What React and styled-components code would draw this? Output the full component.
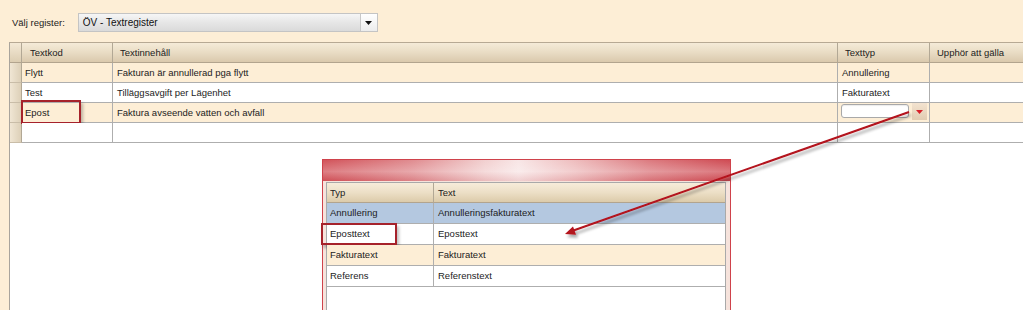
import React from 'react'
import styled, { createGlobalStyle } from 'styled-components'

const GlobalStyle = createGlobalStyle`
  html, body { margin: 0; padding: 0; }
  body {
    font-family: "Liberation Sans", Arial, sans-serif;
    font-size: 9.5px;
    color: #1c1c1c;
    background: #fdeed6;
  }
`

const rows = [
  { kod: 'Flytt', text: 'Fakturan är annullerad pga flytt', typ: 'Annullering' },
  { kod: 'Test', text: 'Tilläggsavgift per Lägenhet', typ: 'Fakturatext' },
  { kod: 'Epost', text: 'Faktura avseende vatten och avfall', typ: null, edit: true },
  { kod: '', text: '', typ: '' },
]

const popupRows = [
  { typ: 'Annullering', text: 'Annulleringsfakturatext', kind: 'sel' },
  { typ: 'Eposttext', text: 'Eposttext', kind: 'white', mark: true },
  { typ: 'Fakturatext', text: 'Fakturatext', kind: 'cream' },
  { typ: 'Referens', text: 'Referenstext', kind: 'white' },
]

export default function App() {
  return (
    <Page>
      <GlobalStyle />
      <Toolbar>
        <Label>Välj register:</Label>
        <Combo>
          <ComboText>ÖV - Textregister</ComboText>
          <ComboButton><Tri color="#111" /></ComboButton>
        </Combo>
      </Toolbar>

      <GridArea>
        <Grid>
          <RowHead header />
          <HeadCell pad={8}>Textkod</HeadCell>
          <HeadCell>Textinnehåll</HeadCell>
          <HeadCell>Texttyp</HeadCell>
          <HeadCell last>Upphör att gälla</HeadCell>

          {rows.map((r, i) => (
            <React.Fragment key={i}>
              <RowHead />
              <Cell cream={i % 2 === 0} pad={3}>
                {r.kod}
                {r.edit && <Mark style={{ left: -1, top: -3, width: 60, height: 24 }} />}
              </Cell>
              <Cell cream={i % 2 === 0}>{r.text}</Cell>
              <Cell cream={i % 2 === 0}>
                {r.edit ? (
                  <EditRow>
                    <EditBox />
                    <EditButton><Tri color="#d8202a" /></EditButton>
                  </EditRow>
                ) : r.typ}
              </Cell>
              <Cell cream={i % 2 === 0} last />
            </React.Fragment>
          ))}
        </Grid>

        <Popup>
          <TitleBar />
          <PopupBody>
            <PopupTable>
              <PHead>Typ</PHead>
              <PHead last>Text</PHead>
              {popupRows.map((r, i) => (
                <React.Fragment key={i}>
                  <PCell kind={r.kind}>
                    {r.typ}
                    {r.mark && <Mark style={{ left: -6, top: -1, width: 76, height: 22 }} />}
                  </PCell>
                  <PCell kind={r.kind} last>{r.text}</PCell>
                </React.Fragment>
              ))}
            </PopupTable>
          </PopupBody>
        </Popup>
      </GridArea>

      <ArrowLayer width="1023" height="310" viewBox="0 0 1023 310">
        <defs>
          <filter id="sh" x="-10%" y="-10%" width="120%" height="130%">
            <feGaussianBlur in="SourceAlpha" stdDeviation="1.5" />
            <feOffset dx="1.5" dy="3" result="b" />
            <feComponentTransfer><feFuncA type="linear" slope="0.35" /></feComponentTransfer>
            <feMerge><feMergeNode /><feMergeNode in="SourceGraphic" /></feMerge>
          </filter>
        </defs>
        <g filter="url(#sh)">
          <line x1="909" y1="112" x2="572" y2="231" stroke="#b3121d" strokeWidth="2" />
          <polygon points="565,234 573,226.5 576,234.8" fill="#b3121d" />
        </g>
      </ArrowLayer>
    </Page>
  )
}

function Tri({ color }) {
  return (
    <svg width="7" height="4" viewBox="0 0 7 4">
      <polygon points="0,0 7,0 3.5,4" fill={color} />
    </svg>
  )
}

const Page = styled.div`
  position: relative;
  width: 1023px;
  height: 310px;
  overflow: hidden;
  background: #fdeed6;
  display: flex;
  flex-direction: column;
`

const Toolbar = styled.div`
  height: 42px;
  box-sizing: border-box;
  padding: 13px 0 0 12px;
  display: flex;
  align-items: flex-start;
`

const Label = styled.span`
  line-height: 19px;
  color: #222;
`

const Combo = styled.div`
  margin-left: 13px;
  width: 300px;
  height: 19px;
  box-sizing: border-box;
  border: 1px solid #c4c4c4;
  background: linear-gradient(#f6f6f6, #e6e6e6 50%, #dadada);
  display: flex;
  align-items: stretch;
`

const ComboText = styled.span`
  flex: 1;
  padding-left: 4px;
  line-height: 17px;
  font-size: 10px;
  color: #111;
`

const ComboButton = styled.div`
  width: 16px;
  border-left: 1px solid #c8c8c8;
  background: linear-gradient(#ffffff, #ececec);
  display: flex;
  align-items: center;
  justify-content: center;
`

const GridArea = styled.div`
  flex: 1;
  margin-left: 9px;
  border-left: 1px solid #a9a49c;
  border-top: 1px solid #b7a994;
  background: #ffffff;
  display: flex;
  flex-direction: column;
  min-height: 0;
`

const Grid = styled.div`
  display: grid;
  grid-template-columns: 12px 91px 725px 92px 1fr;
  grid-auto-rows: 20px;
`

const RowHead = styled.div`
  box-sizing: border-box;
  border-right: 1px solid #b2a895;
  border-bottom: 1px solid ${p => (p.header ? '#b2a48e' : '#c9bda8')};
  background: ${p => (p.header
    ? 'linear-gradient(#f4e9d6, #dccdb2)'
    : 'linear-gradient(90deg, #f0e6d4, #ddd0b8)')};
`

const HeadCell = styled.div`
  box-sizing: border-box;
  padding-left: ${p => p.pad || 7}px;
  line-height: 19px;
  color: #222;
  border-right: ${p => (p.last ? 'none' : '1px solid #b2a895')};
  border-bottom: 1px solid #b2a48e;
  background: linear-gradient(#f5ebd8, #e9dcc4 50%, #dac9ad);
  white-space: nowrap;
`

const Cell = styled.div`
  position: relative;
  box-sizing: border-box;
  padding-left: ${p => p.pad || 4}px;
  line-height: 19px;
  color: #1c1c1c;
  border-right: ${p => (p.last ? 'none' : '1px solid #aeaeae')};
  border-bottom: 1px solid #aeaeae;
  background: ${p => (p.cream ? '#fdeed6' : '#ffffff')};
  white-space: nowrap;
`

const EditRow = styled.div`
  display: flex;
  align-items: flex-start;
  gap: 3px;
  padding-top: 0px;
  margin-left: -1px;
`

const EditBox = styled.div`
  width: 68px;
  height: 14px;
  margin-top: 1px;
  box-sizing: border-box;
  border: 1px solid #a9a9a9;
  border-radius: 3px;
  background: #fff;
  box-shadow: inset 0 1px 1px rgba(0, 0, 0, 0.08);
`

const EditButton = styled.div`
  width: 15px;
  height: 17px;
  background: linear-gradient(#f3e3d0, #e2ccb2);
  display: flex;
  align-items: center;
  justify-content: center;
`

const Mark = styled.div`
  position: absolute;
  box-sizing: border-box;
  border: 2px solid #a6222b;
  box-shadow: 2px 3px 3px rgba(0, 0, 0, 0.25);
  pointer-events: none;
`

const Popup = styled.div`
  margin: 16px 0 0 312px;
  width: 409px;
  flex: 1;
  box-sizing: border-box;
  border: 1px solid #cf424b;
  border-bottom: none;
  display: flex;
  flex-direction: column;
`

const TitleBar = styled.div`
  height: 21px;
  background:
    linear-gradient(rgba(255, 255, 255, 0) 0%, rgba(255, 255, 255, 0.25) 55%, rgba(180, 40, 50, 0.12) 100%),
    linear-gradient(90deg, #d2535a 0%, #e08c90 22%, #f2d0d0 40%, #f8e6e6 48%, #eebcbd 62%, #dc7b80 80%, #cf4b53 100%);
`

const PopupBody = styled.div`
  flex: 1;
  padding: 1px 4px 0 3px;
  background: #f6e3dc;
  display: flex;
`

const PopupTable = styled.div`
  flex: 1;
  border: 1px solid #a9a9a9;
  border-bottom: none;
  background: #ffffff;
  display: grid;
  grid-template-columns: 107px 1fr;
  grid-template-rows: 20px repeat(4, 21px);
  align-content: start;
`

const PHead = styled.div`
  box-sizing: border-box;
  padding-left: ${p => (p.last ? 4 : 3)}px;
  line-height: 19px;
  color: #222;
  border-right: ${p => (p.last ? 'none' : '1px solid #b2a895')};
  border-bottom: 1px solid #b2a48e;
  background: linear-gradient(#f7ecda, #ecdfc6 50%, #dccbaa);
`

const cellBg = { sel: '#b4c8e0', white: '#ffffff', cream: '#fdeed6' }

const PCell = styled.div`
  position: relative;
  box-sizing: border-box;
  padding-left: ${p => (p.last ? 4 : 3)}px;
  line-height: 20px;
  color: #1c1c1c;
  border-right: ${p => (p.last ? 'none' : '1px solid #aeaeae')};
  border-bottom: 1px solid #aeaeae;
  background: ${p => cellBg[p.kind]};
  white-space: nowrap;
`

const ArrowLayer = styled.svg`
  position: absolute;
  left: 0;
  top: 0;
  pointer-events: none;
`
